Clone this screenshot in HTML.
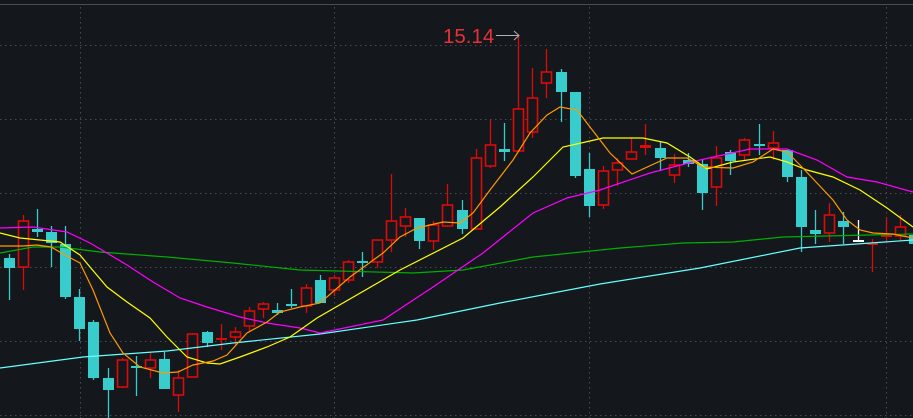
<!DOCTYPE html>
<html><head><meta charset="utf-8"><style>
html,body{margin:0;padding:0;background:#14171c;overflow:hidden}
svg{display:block}
</style></head><body>
<svg id="s" width="913" height="418" xmlns="http://www.w3.org/2000/svg">
<rect width="913" height="418" fill="#14171c"/>
<line x1="0" y1="4.5" x2="913" y2="4.5" stroke="#4a4d52" stroke-width="1"/>
<g stroke="#474b52" stroke-width="1" stroke-dasharray="1.5,3.5">
<line x1="0" y1="45.5" x2="913" y2="45.5"/>
<line x1="0" y1="119.5" x2="913" y2="119.5"/>
<line x1="0" y1="193.5" x2="913" y2="193.5"/>
<line x1="0" y1="267.5" x2="913" y2="267.5"/>
<line x1="0" y1="341.5" x2="913" y2="341.5"/>
<line x1="0" y1="415.5" x2="913" y2="415.5"/>
<line x1="80.5" y1="7" x2="80.5" y2="418"/>
<line x1="334.5" y1="7" x2="334.5" y2="418"/>
<line x1="589.5" y1="7" x2="589.5" y2="418"/>
<line x1="886.5" y1="7" x2="886.5" y2="418"/>
</g>
<g id="c"></g>
<g fill="none" stroke-width="1.2">
<polyline stroke="#66ffff" points="0,368 83,357 167,351 233,343 320,334 417,320 500,303 600,284 700,268 800,248 913,240"/>
<polyline stroke="#00b000" points="0,253 33,247 60,247 100,252 167,257 233,263 300,270 413,273 463,270 533,257 620,248 683,243 733,242 783,237 913,234"/>
<polyline stroke="#ff00ff" points="0,228 33,227 67,232 90,243 127,265 153,282 180,298 207,307 240,317 267,323 300,328 320,333 383,320 433,287 483,253 533,213 567,198 600,190 650,173 700,160 750,149 787,149 817,160 847,177 877,182 913,192"/>
<polyline stroke="#ffff00" points="0,233 20,238 60,242 80,255 90,267 107,287 127,302 150,318 167,337 187,357 207,363 220,364 240,357 267,347 290,337 317,318 400,270 463,238 500,207 533,177 563,147 590,141 603,138 643,138 667,143 690,157 707,169 733,162 770,157 787,162 807,170 833,177 860,190 887,208 913,227"/>
<polyline stroke="#ff9900" points="0,246 23,246 37,245 51,247 65,255 80,263 93,290 110,333 123,353 140,367 163,373 178,372 193,365 213,361 227,355 247,333 267,322 280,312 300,307 320,303 350,277 383,253 400,237 417,228 443,222 460,223 473,213 490,190 513,160 530,133 547,115 560,107 577,110 590,127 610,153 632,174 667,158 687,158 703,167 733,168 753,162 773,149 787,152 800,165 817,183 833,200 847,220 860,230 873,233 893,234 913,238"/>
</g>
<text x="443" y="43" fill="#e8303a" font-family="Liberation Sans, sans-serif" font-size="20.5">15.14</text>
<g stroke="#b0b0b0" stroke-width="1" fill="none"><line x1="496" y1="35.5" x2="519" y2="35.5"/><polyline points="514,31 519,35.5 514,40"/></g>
</svg>
<script>
var d=[
[9,'c',258,268,254,300],[23,'r',221,267,215,290],[37,'c',229,232,209,237],[51,'c',232,243,226,267],
[65,'c',244,297,226,299],[79,'c',297,329,289,341],[93,'c',322,378,320,380],[108,'c',378,390,368,418],
[122,'r',360,387,358,388],[136,'c',366,368,356,396],[150,'r',360,368,352,378],[164,'c',359,389,352,389],
[178,'r',378,395,370,412],[192,'r',334,377,333,377],[207,'c',332,343,331,347],[221,'r',338,340,324,350],
[235,'r',332,337,327,345],[249,'r',311,326,307,332],[263,'r',304,309,302,318],[277,'c',310,313,303,315],
[291,'c',304,306,289,308],[306,'r',288,306,284,313],[320,'c',280,303,275,303],[334,'r',278,290,275,296],
[348,'r',262,280,260,283],[362,'c',261,263,252,277],[377,'r',240,262,240,268],[391,'r',221,240,174,252],
[405,'r',217,226,208,237],[419,'c',218,241,218,249],[433,'r',225,241,221,250],[447,'r',205,226,184,227],
[462,'c',210,229,200,234],[476,'r',158,229,149,229],[490,'r',145,166,120,168],[504,'c',149,152,123,161],
[518,'r',109,151,35,152],[532,'r',98,132,68,138],[546,'r',72,83,49,98],[561,'c',72,92,69,122],
[575,'c',92,176,92,178],[589,'c',169,206,153,217],[603,'r',171,205,166,209],[617,'r',163,170,158,186],
[631,'r',152,159,138,159],[645,'r',145,148,124,155],[660,'c',148,158,142,171],[674,'r',165,175,154,183],
[688,'c',160,164,153,167],[702,'c',164,193,160,210],[716,'r',158,187,146,206],[730,'c',152,161,150,175],
[744,'r',140,155,138,160],[759,'c',144,146,124,155],[773,'r',143,148,131,160],[787,'c',150,177,150,182],
[801,'c',177,227,170,252],[815,'c',230,234,210,244],[829,'r',215,233,203,242],[843,'c',221,227,212,244],
[858,'w',240,242,220,242],[872,'r',243,245,239,272],[886,'r',235,237,217,241],[900,'r',227,236,215,241],
[914,'c',235,244,232,248]];
var g=document.getElementById('c'),ns='http://www.w3.org/2000/svg',h='';
d.forEach(function(a){var x=a[0],t=a[1],o=a[2],c=a[3],hi=a[4],lo=a[5];
var col=t=='c'?'#38cccc':t=='r'?'#dd0a0a':'#ffffff';
h+='<line x1="'+(x+0.5)+'" y1="'+hi+'" x2="'+(x+0.5)+'" y2="'+lo+'" stroke="'+col+'" stroke-width="1.3"/>';
if(t=='r'&&c-o>3){h+='<rect x="'+(x-4.5)+'" y="'+o+'" width="10" height="'+(c-o)+'" fill="#14171c" stroke="'+col+'" stroke-width="1.6"/>';}
else{var hh=Math.max(c-o,2);h+='<rect x="'+(x-5)+'" y="'+o+'" width="11" height="'+hh+'" fill="'+col+'"/>';}
});
g.innerHTML=h;
</script>
</body></html>
